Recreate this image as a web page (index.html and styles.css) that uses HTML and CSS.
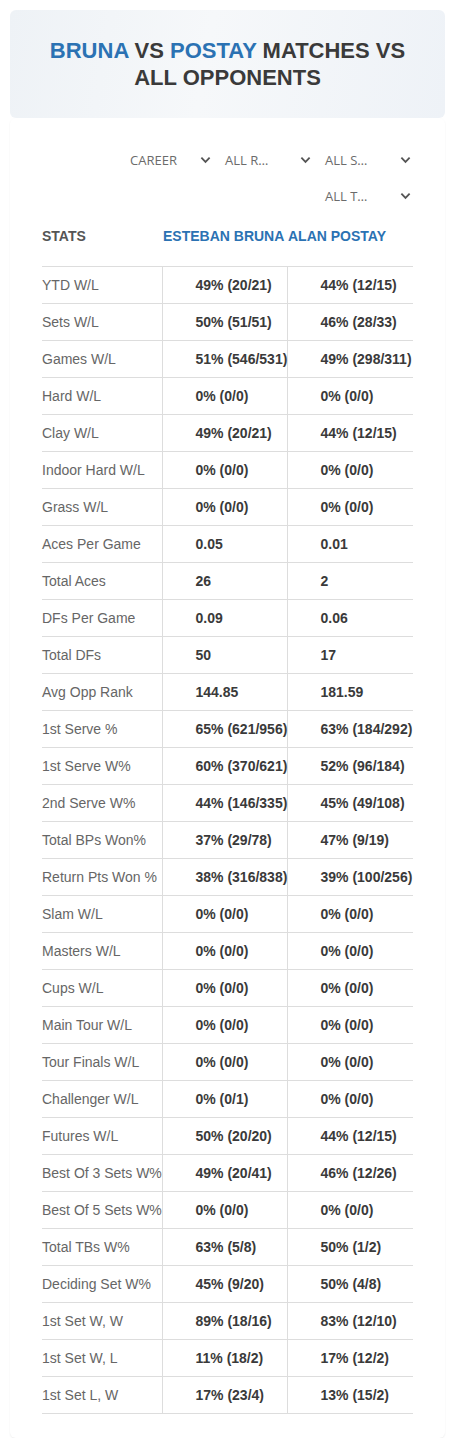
FILE: index.html
```html
<!DOCTYPE html>
<html lang="en">
<head>
  <meta charset="UTF-8">
  <title>Bruna vs Postay Matches vs All Opponents</title>
  <link rel="stylesheet" href="styles.css">
</head>
<body>

  <div class="title-card">
    <h1><span class="player">BRUNA</span> VS <span class="player">POSTAY</span> MATCHES VS ALL OPPONENTS</h1>
  </div>

  <div class="stats-card">
    <!-- Filters -->
    <div class="filters">
      <div class="filter"><span>CAREER</span><svg viewBox="0 0 12 8"><path d="M1.5 1.5 6 6l4.5-4.5"/></svg></div>
      <div class="filter"><span>ALL R…</span><svg viewBox="0 0 12 8"><path d="M1.5 1.5 6 6l4.5-4.5"/></svg></div>
      <div class="filter"><span>ALL S…</span><svg viewBox="0 0 12 8"><path d="M1.5 1.5 6 6l4.5-4.5"/></svg></div>
      <div class="filter"><span>ALL T…</span><svg viewBox="0 0 12 8"><path d="M1.5 1.5 6 6l4.5-4.5"/></svg></div>
    </div>

    <table class="stats">
      <colgroup>
        <col class="c-label">
        <col class="c-p1">
        <col class="c-p2">
      </colgroup>
      <thead>
        <tr>
          <th class="label">STATS</th>
          <th class="name">ESTEBAN BRUNA</th>
          <th class="name">ALAN POSTAY</th>
        </tr>
      </thead>
      <tbody id="rows"></tbody>
    </table>
  </div>

  <script>
    const rows = [
      ['YTD W/L', '49% (20/21)', '44% (12/15)'],
      ['Sets W/L', '50% (51/51)', '46% (28/33)'],
      ['Games W/L', '51% (546/531)', '49% (298/311)'],
      ['Hard W/L', '0% (0/0)', '0% (0/0)'],
      ['Clay W/L', '49% (20/21)', '44% (12/15)'],
      ['Indoor Hard W/L', '0% (0/0)', '0% (0/0)'],
      ['Grass W/L', '0% (0/0)', '0% (0/0)'],
      ['Aces Per Game', '0.05', '0.01'],
      ['Total Aces', '26', '2'],
      ['DFs Per Game', '0.09', '0.06'],
      ['Total DFs', '50', '17'],
      ['Avg Opp Rank', '144.85', '181.59'],
      ['1st Serve %', '65% (621/956)', '63% (184/292)'],
      ['1st Serve W%', '60% (370/621)', '52% (96/184)'],
      ['2nd Serve W%', '44% (146/335)', '45% (49/108)'],
      ['Total BPs Won%', '37% (29/78)', '47% (9/19)'],
      ['Return Pts Won %', '38% (316/838)', '39% (100/256)'],
      ['Slam W/L', '0% (0/0)', '0% (0/0)'],
      ['Masters W/L', '0% (0/0)', '0% (0/0)'],
      ['Cups W/L', '0% (0/0)', '0% (0/0)'],
      ['Main Tour W/L', '0% (0/0)', '0% (0/0)'],
      ['Tour Finals W/L', '0% (0/0)', '0% (0/0)'],
      ['Challenger W/L', '0% (0/1)', '0% (0/0)'],
      ['Futures W/L', '50% (20/20)', '44% (12/15)'],
      ['Best Of 3 Sets W%', '49% (20/41)', '46% (12/26)'],
      ['Best Of 5 Sets W%', '0% (0/0)', '0% (0/0)'],
      ['Total TBs W%', '63% (5/8)', '50% (1/2)'],
      ['Deciding Set W%', '45% (9/20)', '50% (4/8)'],
      ['1st Set W, W', '89% (18/16)', '83% (12/10)'],
      ['1st Set W, L', '11% (18/2)', '17% (12/2)'],
      ['1st Set L, W', '17% (23/4)', '13% (15/2)']
    ];

    const tbody = document.getElementById('rows');
    rows.forEach(([label, a, b]) => {
      const tr = document.createElement('tr');
      tr.innerHTML = `<td class="label">${label}</td><td class="val">${a}</td><td class="val">${b}</td>`;
      tbody.appendChild(tr);
    });
  </script>

</body>
</html>
```

FILE: styles.css
```css
body {
  margin: 0;
  background: #fff;
  font-family: "Liberation Sans", Arial, sans-serif;
  color: #333;
}

.title-card {
  margin: 10px 10px 0;
  height: 108px;
  display: flex;
  align-items: center;
  justify-content: center;
  border-radius: 6px;
  background: linear-gradient(100deg, #eef2f6 0%, #f6f8fa 45%, #eef2f7 100%);
}
.title-card h1 {
  margin: 0;
  padding: 0 30px;
  text-align: center;
  font-size: 22px;
  line-height: 27px;
  font-weight: bold;
  color: #3a3a3a;
}
.title-card .player {
  color: #2b72b3;
}

.stats-card {
  margin: 0 10px;
  padding: 24px 0 24px 32px;
  border-radius: 6px;
  box-shadow: 0 1px 2px rgba(0, 0, 0, 0.07);
}

.filters {
  display: flex;
  flex-wrap: wrap;
  justify-content: flex-end;
  padding-right: 25px;
}
.filter {
  width: 100px;
  height: 36px;
  box-sizing: border-box;
  padding: 0 9px 0 5px;
  display: flex;
  align-items: center;
  justify-content: space-between;
  font-family: "Open Sans", sans-serif;
  font-size: 13px;
  color: #6b6b6b;
}
.filter:first-child {
  padding-left: 10px;
}
.filter svg {
  width: 11px;
  height: 8px;
  fill: none;
  stroke: #555;
  stroke-width: 2;
}

.stats {
  width: 371px;
  table-layout: fixed;
  border-collapse: collapse;
  font-size: 14px;
}
.c-label { width: 120px; }
.c-p1 { width: 125px; }
.c-p2 { width: 126px; }

.stats th {
  height: 44px;
  padding: 0 0 8px 0;
  text-align: left;
  font-size: 14px;
  font-weight: bold;
  white-space: nowrap;
}
.stats th.label {
  color: #555;
}
.stats th.name {
  padding-left: 1px;
  color: #2b72b3;
}

.stats td {
  height: 36px;
  padding: 0;
  border-top: 1px solid #ddd;
  white-space: nowrap;
}
.stats tbody tr:last-child td {
  border-bottom: 1px solid #ddd;
}
.stats td.label {
  color: #666;
}
.stats td.val {
  padding-left: 33px;
  border-left: 1px solid #ddd;
  font-weight: bold;
  color: #3a3a3a;
}
```
